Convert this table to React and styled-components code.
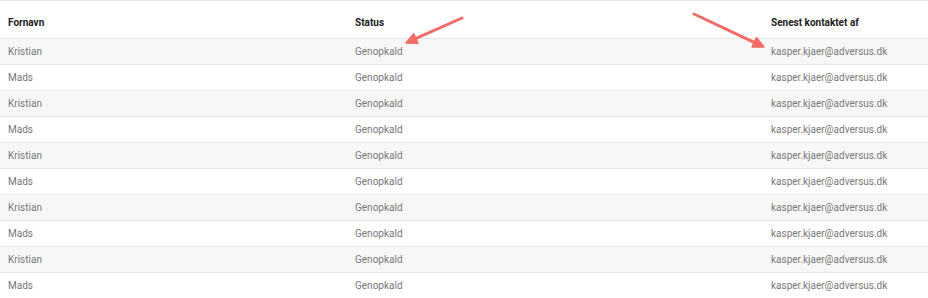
import React from 'react'
import styled, { createGlobalStyle } from 'styled-components'

const GlobalStyle = createGlobalStyle`
  body {
    margin: 0;
    background: #fff;
    font-family: Roboto, "Liberation Sans", sans-serif;
  }
`

const Wrapper = styled.div`
  position: relative;
  width: 928px;
  padding-top: 1px;
  border-top: 1px solid #e8e8e8;
`

const Table = styled.table`
  width: 100%;
  border-collapse: collapse;
  table-layout: fixed;
`

const HeadCell = styled.th`
  text-align: left;
  font-size: 10px;
  font-weight: 700;
  color: #222;
  height: 32px;
  padding: 4px 8px 0;
  border-bottom: 1px solid #e6e6e6;
  width: ${p => p.$width || 'auto'};
`

const Row = styled.tr`
  background: ${p => (p.$striped ? '#f7f7f7' : '#fff')};
  border-bottom: 1px solid #e6e6e6;
`

const Cell = styled.td`
  font-size: 10px;
  color: #777;
  height: 25px;
  padding: 0 8px;
  white-space: nowrap;
`

const Arrows = styled.svg`
  position: absolute;
  left: 0;
  top: 0;
  pointer-events: none;
`

const rows = Array.from({ length: 10 }, (_, i) => ({
  name: i % 2 === 0 ? 'Kristian' : 'Mads',
  status: 'Genopkald',
  contact: 'kasper.kjaer@adversus.dk'
}))

function Arrow({ x1, y1, x2, y2 }) {
  const angle = Math.atan2(y2 - y1, x2 - x1)
  const len = 12
  const spread = 0.45
  const a = [x2 - len * Math.cos(angle - spread), y2 - len * Math.sin(angle - spread)]
  const b = [x2 - len * Math.cos(angle + spread), y2 - len * Math.sin(angle + spread)]
  const bx = x2 - 8 * Math.cos(angle)
  const by = y2 - 8 * Math.sin(angle)
  return (
    <g>
      <line x1={x1} y1={y1} x2={bx} y2={by} stroke="#f46a64" strokeWidth="3" strokeLinecap="round" />
      <polygon points={`${x2},${y2} ${a[0]},${a[1]} ${b[0]},${b[1]}`} fill="#f46a64" stroke="#f46a64" strokeWidth="1.5" strokeLinejoin="round" />
    </g>
  )
}

export default function App() {
  return (
    <>
      <GlobalStyle />
      <Wrapper>
        <Table>
          <thead>
            <tr>
              <HeadCell $width="331px">Fornavn</HeadCell>
              <HeadCell $width="400px">Status</HeadCell>
              <HeadCell>Senest kontaktet af</HeadCell>
            </tr>
          </thead>
          <tbody>
            {rows.map((r, i) => (
              <Row key={i} $striped={i % 2 === 0}>
                <Cell>{r.name}</Cell>
                <Cell>{r.status}</Cell>
                <Cell>{r.contact}</Cell>
              </Row>
            ))}
          </tbody>
        </Table>
        <Arrows width="928" height="60">
          <Arrow x1={462} y1={17} x2={406} y2={42} />
          <Arrow x1={694} y1={13} x2={764} y2={46} />
        </Arrows>
      </Wrapper>
    </>
  )
}
